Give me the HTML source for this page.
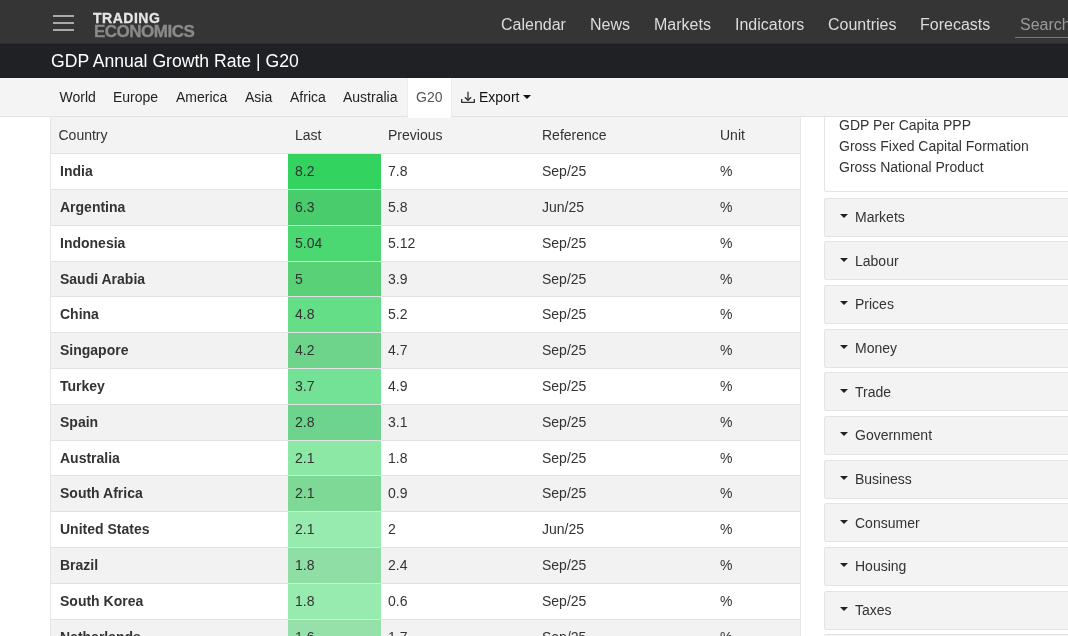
<!DOCTYPE html>
<html><head><meta charset="utf-8">
<style>
*{box-sizing:border-box}
body{will-change:transform}
html,body{margin:0;padding:0;width:1068px;height:636px;overflow:hidden;background:#fff;font-family:"Liberation Sans",sans-serif;color:#333}
.a{position:absolute;white-space:nowrap}
#nav{position:absolute;z-index:5;left:0;top:0;width:1068px;height:43px;background:#353535}
#nav .i{position:absolute;top:15px;font-size:16px;line-height:20px;color:#dcdcdc}
.hb{position:absolute;left:53px;width:21px;height:2px;background:#a9a9a9}
#title{position:absolute;left:0;top:43px;width:1068px;height:35px;background:#202124}
#title span{position:absolute;left:51px;top:8px;font-size:17.6px;line-height:20px;color:#fff}
#sub{position:absolute;z-index:5;left:0;top:78px;width:1068px;height:39px;background:#f4f4f4;border-bottom:1px solid #e3e3e3}
#sub .i{position:absolute;top:10.4px;font-size:14px;line-height:18px;color:#222}
#g20{position:absolute;left:407px;top:0;width:45px;height:40px;background:#fff;border-left:1px solid #ececec;border-right:1px solid #ececec}
#tbl{position:absolute;left:50px;top:117px;width:751px;height:519px;border-left:1px solid #e6e6e6;border-right:1px solid #e6e6e6}
.row{position:absolute;left:0;width:749px;height:36px}
.row.hd{background:#f3f3f3}
.row.st{background:#f2f2f2}
.row .c{position:absolute;top:0;font-size:14px;line-height:18px;color:#333}
.gl{position:absolute;left:237px;width:93px;top:0;bottom:0}
.sl{font-size:14px;line-height:18px;color:#333}
.b{font-weight:bold}
.row{border-top:1px solid #e2e2e2}
.row.hd{border-top:0}
.pnl{position:absolute;left:824px;width:260px;height:39px;background:#f3f3f3;border:1px solid #e4e4e4;border-radius:2px}
.pnl .t{position:absolute;left:30px;top:9.3px;font-size:14px;line-height:18px;color:#333}
.pnl .car{position:absolute;left:15px;top:15.5px;width:0;height:0;border-left:4px solid transparent;border-right:4px solid transparent;border-top:4.5px solid #222}
</style></head><body>
<div id="nav">
  <div class="hb" style="top:15px"></div>
  <div class="hb" style="top:22px"></div>
  <div class="hb" style="top:29px"></div>
  <div class="a" style="left:93px;top:9.5px;font-size:14px;font-weight:bold;line-height:16px;color:#e6e6e6;letter-spacing:0.5px;-webkit-text-stroke:0.3px #e6e6e6">TRADING</div>
  <div class="a" style="left:94px;top:22px;font-size:17px;font-weight:bold;line-height:19px;color:#8a8a8a;letter-spacing:-0.5px;-webkit-text-stroke:0.35px #8a8a8a">ECONOMICS</div>
  <div class="i a" style="left:501px">Calendar</div>
  <div class="i a" style="left:590px">News</div>
  <div class="i a" style="left:654px">Markets</div>
  <div class="i a" style="left:735px">Indicators</div>
  <div class="i a" style="left:828px">Countries</div>
  <div class="i a" style="left:920px">Forecasts</div>
  <div class="i a" style="left:1020px;color:#9a9a9a">Search</div>
  <div class="a" style="left:1015px;top:37px;width:60px;height:1px;background:#777"></div>
</div>
<div class="a" style="left:0;top:43px;width:1068px;height:1px;background:#2b2c2e;z-index:6"></div>
<div id="title"><span class="a">GDP Annual Growth Rate | G20</span></div>
<div id="sub">
  <div id="g20"></div>
  <div class="i a" style="left:59.5px">World</div>
  <div class="i a" style="left:113px">Europe</div>
  <div class="i a" style="left:176px">America</div>
  <div class="i a" style="left:245px">Asia</div>
  <div class="i a" style="left:290px">Africa</div>
  <div class="i a" style="left:343px">Australia</div>
  <div class="i a" style="left:416px;color:#555">G20</div>
  <div class="i a" style="left:479px;color:#111">Export</div>
  <svg class="a" style="left:460px;top:12px" width="16" height="16" viewBox="0 0 16 16" fill="none" stroke="#333" stroke-width="1.3"><path d="M1.7 9 V12.4 H14.3 V9"/><path d="M8 1.7 V10.2"/><path d="M4.9 7.2 L8 10.3 L11.1 7.2"/></svg>
  <div class="a" style="left:523px;top:16.5px;width:0;height:0;border-left:4px solid transparent;border-right:4px solid transparent;border-top:4.5px solid #111"></div>
</div>
<div id="tbl">
<div class="row hd" style="top:0"><div class="c a" style="left:7.5px;top:8.5px">Country</div><div class="c a" style="left:244px;top:8.5px">Last</div><div class="c a" style="left:337px;top:8.5px">Previous</div><div class="c a" style="left:491px;top:8.5px">Reference</div><div class="c a" style="left:669px;top:8.5px">Unit</div></div>
<div class="row" style="top:36.20px"><div class="gl" style="background:rgb(50,212,95)"></div><div class="c a b" style="left:9px;top:8px">India</div><div class="c a" style="left:244px;top:8px">8.2</div><div class="c a" style="left:337px;top:8px">7.8</div><div class="c a" style="left:491px;top:8px">Sep/25</div><div class="c a" style="left:669px;top:8px">%</div></div>
<div class="row st" style="top:72.00px"><div class="gl" style="background:rgb(72,204,108)"></div><div class="c a b" style="left:9px;top:8px">Argentina</div><div class="c a" style="left:244px;top:8px">6.3</div><div class="c a" style="left:337px;top:8px">5.8</div><div class="c a" style="left:491px;top:8px">Jun/25</div><div class="c a" style="left:669px;top:8px">%</div></div>
<div class="row" style="top:107.80px"><div class="gl" style="background:rgb(75,216,115)"></div><div class="c a b" style="left:9px;top:8px">Indonesia</div><div class="c a" style="left:244px;top:8px">5.04</div><div class="c a" style="left:337px;top:8px">5.12</div><div class="c a" style="left:491px;top:8px">Sep/25</div><div class="c a" style="left:669px;top:8px">%</div></div>
<div class="row st" style="top:143.60px"><div class="gl" style="background:rgb(88,209,119)"></div><div class="c a b" style="left:9px;top:8px">Saudi Arabia</div><div class="c a" style="left:244px;top:8px">5</div><div class="c a" style="left:337px;top:8px">3.9</div><div class="c a" style="left:491px;top:8px">Sep/25</div><div class="c a" style="left:669px;top:8px">%</div></div>
<div class="row" style="top:179.40px"><div class="gl" style="background:rgb(100,222,135)"></div><div class="c a b" style="left:9px;top:8px">China</div><div class="c a" style="left:244px;top:8px">4.8</div><div class="c a" style="left:337px;top:8px">5.2</div><div class="c a" style="left:491px;top:8px">Sep/25</div><div class="c a" style="left:669px;top:8px">%</div></div>
<div class="row st" style="top:215.20px"><div class="gl" style="background:rgb(110,212,140)"></div><div class="c a b" style="left:9px;top:8px">Singapore</div><div class="c a" style="left:244px;top:8px">4.2</div><div class="c a" style="left:337px;top:8px">4.7</div><div class="c a" style="left:491px;top:8px">Sep/25</div><div class="c a" style="left:669px;top:8px">%</div></div>
<div class="row" style="top:251.00px"><div class="gl" style="background:rgb(115,226,150)"></div><div class="c a b" style="left:9px;top:8px">Turkey</div><div class="c a" style="left:244px;top:8px">3.7</div><div class="c a" style="left:337px;top:8px">4.9</div><div class="c a" style="left:491px;top:8px">Sep/25</div><div class="c a" style="left:669px;top:8px">%</div></div>
<div class="row st" style="top:286.80px"><div class="gl" style="background:rgb(108,212,140)"></div><div class="c a b" style="left:9px;top:8px">Spain</div><div class="c a" style="left:244px;top:8px">2.8</div><div class="c a" style="left:337px;top:8px">3.1</div><div class="c a" style="left:491px;top:8px">Sep/25</div><div class="c a" style="left:669px;top:8px">%</div></div>
<div class="row" style="top:322.60px"><div class="gl" style="background:rgb(140,232,165)"></div><div class="c a b" style="left:9px;top:8px">Australia</div><div class="c a" style="left:244px;top:8px">2.1</div><div class="c a" style="left:337px;top:8px">1.8</div><div class="c a" style="left:491px;top:8px">Sep/25</div><div class="c a" style="left:669px;top:8px">%</div></div>
<div class="row st" style="top:358.40px"><div class="gl" style="background:rgb(126,216,150)"></div><div class="c a b" style="left:9px;top:8px">South Africa</div><div class="c a" style="left:244px;top:8px">2.1</div><div class="c a" style="left:337px;top:8px">0.9</div><div class="c a" style="left:491px;top:8px">Sep/25</div><div class="c a" style="left:669px;top:8px">%</div></div>
<div class="row" style="top:394.20px"><div class="gl" style="background:rgb(152,235,175)"></div><div class="c a b" style="left:9px;top:8px">United States</div><div class="c a" style="left:244px;top:8px">2.1</div><div class="c a" style="left:337px;top:8px">2</div><div class="c a" style="left:491px;top:8px">Jun/25</div><div class="c a" style="left:669px;top:8px">%</div></div>
<div class="row st" style="top:430.00px"><div class="gl" style="background:rgb(142,222,165)"></div><div class="c a b" style="left:9px;top:8px">Brazil</div><div class="c a" style="left:244px;top:8px">1.8</div><div class="c a" style="left:337px;top:8px">2.4</div><div class="c a" style="left:491px;top:8px">Sep/25</div><div class="c a" style="left:669px;top:8px">%</div></div>
<div class="row" style="top:465.80px"><div class="gl" style="background:rgb(152,235,175)"></div><div class="c a b" style="left:9px;top:8px">South Korea</div><div class="c a" style="left:244px;top:8px">1.8</div><div class="c a" style="left:337px;top:8px">0.6</div><div class="c a" style="left:491px;top:8px">Sep/25</div><div class="c a" style="left:669px;top:8px">%</div></div>
<div class="row st" style="top:501.60px"><div class="gl" style="background:rgb(150,225,170)"></div><div class="c a b" style="left:9px;top:8px">Netherlands</div><div class="c a" style="left:244px;top:8px">1.6</div><div class="c a" style="left:337px;top:8px">1.7</div><div class="c a" style="left:491px;top:8px">Sep/25</div><div class="c a" style="left:669px;top:8px">%</div></div>
</div>
<div class="a" style="left:824px;top:90px;width:260px;height:102px;border:1px solid #e4e4e4;border-radius:2px;background:#fff"></div>
<div class="a sl" style="left:839px;top:116px">GDP Per Capita PPP</div>
<div class="a sl" style="left:839px;top:137px">Gross Fixed Capital Formation</div>
<div class="a sl" style="left:839px;top:157.5px">Gross National Product</div>
<div class="pnl" style="top:197.60px"><div class="car"></div><div class="t">Markets</div></div>
<div class="pnl" style="top:241.27px"><div class="car"></div><div class="t">Labour</div></div>
<div class="pnl" style="top:284.94px"><div class="car"></div><div class="t">Prices</div></div>
<div class="pnl" style="top:328.61px"><div class="car"></div><div class="t">Money</div></div>
<div class="pnl" style="top:372.28px"><div class="car"></div><div class="t">Trade</div></div>
<div class="pnl" style="top:415.95px"><div class="car"></div><div class="t">Government</div></div>
<div class="pnl" style="top:459.62px"><div class="car"></div><div class="t">Business</div></div>
<div class="pnl" style="top:503.29px"><div class="car"></div><div class="t">Consumer</div></div>
<div class="pnl" style="top:546.96px"><div class="car"></div><div class="t">Housing</div></div>
<div class="pnl" style="top:590.63px"><div class="car"></div><div class="t">Taxes</div></div>
<div class="pnl" style="top:634.30px"></div>
</body></html>
